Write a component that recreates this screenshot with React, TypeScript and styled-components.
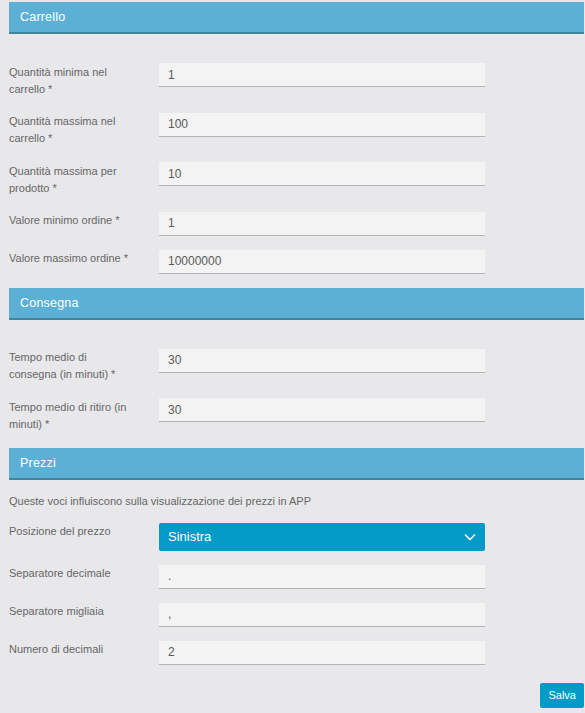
import React from 'react';
import styled, { createGlobalStyle } from 'styled-components';

const GlobalStyle = createGlobalStyle`
  html, body {
    margin: 0;
    padding: 0;
    background: #e8e8ea;
    font-family: "Liberation Sans", Arial, sans-serif;
  }
`;

const Page = styled.div`
  padding: 2px 1px 6px 9px;
  min-height: 713px;
  box-sizing: border-box;
`;

const SectionHeader = styled.div<{ gap?: number }>`
  height: 30px;
  background: #5cb0d5;
  border-bottom: 2px solid #43839c;
  color: #fff;
  font-size: 12.5px;
  letter-spacing: 0.2px;
  display: flex;
  align-items: center;
  padding-left: 11px;
  margin-bottom: ${(p) => p.gap ?? 29}px;
`;

const Row = styled.div`
  display: grid;
  grid-template-columns: 150px 326px;
  align-items: start;
  margin-bottom: 14px;
`;

const Label = styled.label`
  width: 125px;
  font-size: 11px;
  line-height: 17px;
  padding: 0.5px 0 1px;
  color: #666;
`;

const Input = styled.input`
  height: 24px;
  box-sizing: border-box;
  width: 100%;
  border: none;
  border-bottom: 1px solid #b3b3b3;
  background: #f3f3f3;
  padding: 0 9px;
  font-family: inherit;
  font-size: 12px;
  color: #5a5a5a;
  outline: none;
`;

const Note = styled.p`
  margin: 0 0 13px;
  font-size: 11px;
  line-height: 17px;
  color: #666;
`;

const Select = styled.div`
  height: 28px;
  box-sizing: border-box;
  background: #029ac6;
  border-radius: 2px;
  display: flex;
  align-items: center;
  justify-content: space-between;
  padding: 0 9px;
  color: #fff;
  font-size: 13px;
`;

const Footer = styled.div`
  display: flex;
  justify-content: flex-end;
  padding-top: 4px;
`;

const SaveButton = styled.button`
  background: #029ac6;
  color: #fff;
  border: none;
  border-radius: 2px;
  height: 25px;
  padding: 0 8px;
  font-family: inherit;
  font-size: 11px;
`;

type Field = { label: string; value: string };

const carrello: Field[] = [
  { label: 'Quantità minima nel carrello *', value: '1' },
  { label: 'Quantità massima nel carrello *', value: '100' },
  { label: 'Quantità massima per prodotto *', value: '10' },
  { label: 'Valore minimo ordine *', value: '1' },
  { label: 'Valore massimo ordine *', value: '10000000' },
];

const consegna: Field[] = [
  { label: 'Tempo medio di consegna (in minuti) *', value: '30' },
  { label: 'Tempo medio di ritiro (in minuti) *', value: '30' },
];

const prezzi: Field[] = [
  { label: 'Separatore decimale', value: '.' },
  { label: 'Separatore migliaia', value: ',' },
  { label: 'Numero di decimali', value: '2' },
];

function FieldRow({ label, value }: Field) {
  return (
    <Row>
      <Label>{label}</Label>
      <Input defaultValue={value} />
    </Row>
  );
}

export default function App() {
  return (
    <>
      <GlobalStyle />
      <Page>
        <SectionHeader>Carrello</SectionHeader>
        {carrello.map((f) => (
          <FieldRow key={f.label} {...f} />
        ))}

        <SectionHeader>Consegna</SectionHeader>
        {consegna.map((f) => (
          <FieldRow key={f.label} {...f} />
        ))}

        <SectionHeader gap={13}>Prezzi</SectionHeader>
        <Note>Queste voci influiscono sulla visualizzazione dei prezzi in APP</Note>
        <Row>
          <Label>Posizione del prezzo</Label>
          <Select>
            <span>Sinistra</span>
            <svg width="12" height="8" viewBox="0 0 12 8">
              <path d="M1 1.5 L6 6.5 L11 1.5" fill="none" stroke="#fff" strokeWidth="1.5" />
            </svg>
          </Select>
        </Row>
        {prezzi.map((f) => (
          <FieldRow key={f.label} {...f} />
        ))}

        <Footer>
          <SaveButton>Salva</SaveButton>
        </Footer>
      </Page>
    </>
  );
}
